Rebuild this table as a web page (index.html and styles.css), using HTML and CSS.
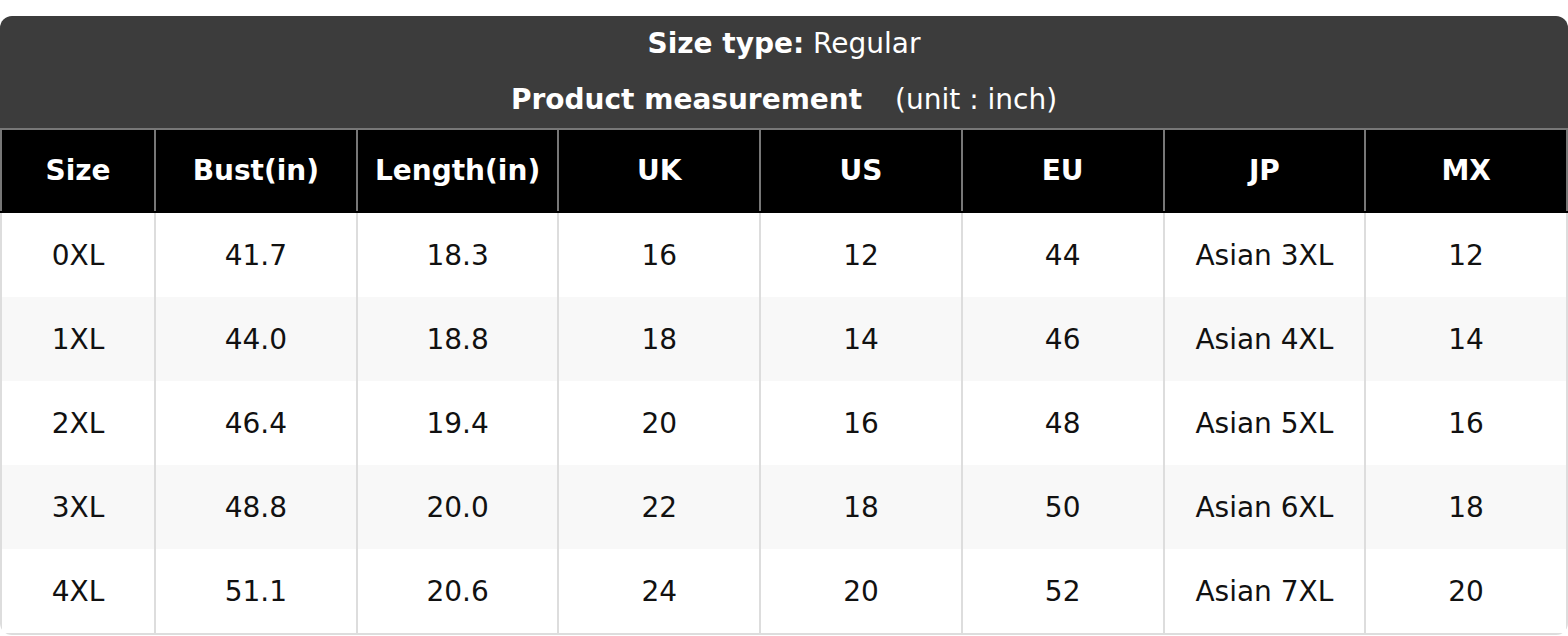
FILE: index.html
```html
<!DOCTYPE html>
<html>
<head>
<meta charset="utf-8">
<link rel="stylesheet" href="styles.css">
</head>
<body>
<div class="chart">
  <div class="title">
    <div class="title-line"><strong>Size type:</strong> Regular</div>
    <div class="title-line"><strong>Product measurement</strong> <span class="unit">(unit : inch)</span></div>
  </div>
  <table class="size-table">
    <colgroup>
      <col class="col-size">
      <col><col><col><col><col><col><col>
    </colgroup>
    <thead>
      <tr><th>Size</th><th>Bust(in)</th><th>Length(in)</th><th>UK</th><th>US</th><th>EU</th><th>JP</th><th>MX</th></tr>
    </thead>
    <tbody>
      <tr><td>0XL</td><td>41.7</td><td>18.3</td><td>16</td><td>12</td><td>44</td><td>Asian 3XL</td><td>12</td></tr>
      <tr><td>1XL</td><td>44.0</td><td>18.8</td><td>18</td><td>14</td><td>46</td><td>Asian 4XL</td><td>14</td></tr>
      <tr><td>2XL</td><td>46.4</td><td>19.4</td><td>20</td><td>16</td><td>48</td><td>Asian 5XL</td><td>16</td></tr>
      <tr><td>3XL</td><td>48.8</td><td>20.0</td><td>22</td><td>18</td><td>50</td><td>Asian 6XL</td><td>18</td></tr>
      <tr><td>4XL</td><td>51.1</td><td>20.6</td><td>24</td><td>20</td><td>52</td><td>Asian 7XL</td><td>20</td></tr>
    </tbody>
  </table>
</div>
</body>
</html>
```

FILE: styles.css
```css
html, body {
  margin: 0;
  padding: 0;
  background: #ffffff;
}

body {
  font-family: "DejaVu Sans", "Liberation Sans", sans-serif;
  padding-top: 16px;
}

.chart {
  width: 1568px;
  border-radius: 12px;
  overflow: hidden;
}

.title {
  background: #3c3c3c;
  color: #ffffff;
  text-align: center;
  font-size: 28px;
}

.title-line {
  height: 56px;
  line-height: 56px;
}

.title strong {
  font-weight: bold;
}

.unit {
  margin-left: 24px;
}

.size-table {
  width: 100%;
  border-collapse: collapse;
  table-layout: fixed;
  font-size: 28px;
}

.col-size {
  width: 154px;
}

.size-table th {
  background: #000000;
  color: #ffffff;
  font-weight: bold;
  height: 81px;
  padding: 0;
  border: 2px solid #777777;
  border-bottom-color: #000000;
  text-align: center;
}

.size-table td {
  height: 84px;
  padding: 0;
  border-left: 2px solid #dddddd;
  border-right: 2px solid #dddddd;
  border-top: none;
  border-bottom: none;
  text-align: center;
  color: #111111;
}

.size-table tbody tr:nth-child(even) td {
  background: #f8f8f8;
}

.size-table tbody tr:last-child td {
  border-bottom: 2px solid #dddddd;
}
```
